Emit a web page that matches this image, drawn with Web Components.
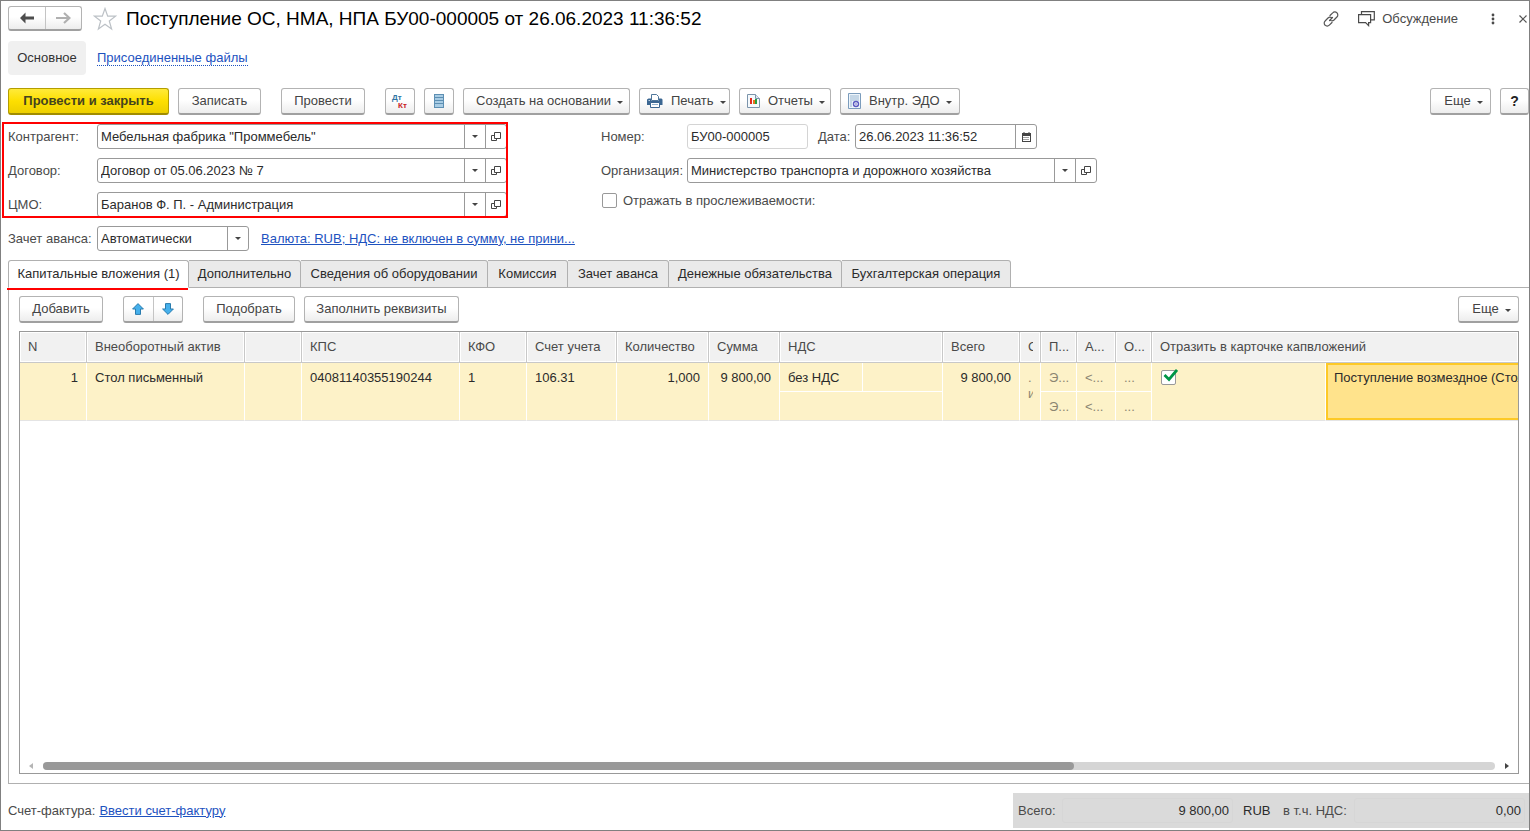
<!DOCTYPE html>
<html lang="ru">
<head>
<meta charset="utf-8">
<title>Поступление ОС, НМА, НПА</title>
<style>
  body { margin: 0; background: #fff; font: 13px/16px "Liberation Sans", Arial, sans-serif; color: #4a4a4a; }
</style>
</head>
<body>
<receipt-form></receipt-form>
<script>
const base = `
  *, *::before, *::after { box-sizing: border-box; }
  :host { box-sizing: border-box; display: block; }
  button, input, select { font: inherit; color: inherit; margin: 0; }
  button { cursor: pointer; }
  svg { display: block; flex: none; }
  a { color: #1d52bf; }
`;
const define = (name, render, after) => customElements.define(name, class extends HTMLElement {
  connectedCallback() {
    if (this.shadowRoot) return;
    this.attachShadow({ mode: 'open' }).innerHTML = render(this);
    if (after) after(this);
  }
});

const icons = {
  back: `<svg width="16" height="12" viewBox="0 0 16 12"><path d="M6.500.5L1 6l5.500 5.500V7.500H15v-3H6.500z" fill="#4d4d4d"/></svg>`,
  forward: `<svg width="16" height="12" viewBox="0 0 16 12"><path d="M9 1l5.500 5L9 11M14 6H1" fill="none" stroke="#b0b0b0" stroke-width="2.200"/></svg>`,
  star: `<svg width="24" height="24" viewBox="0 0 24 24"><path d="M12 1.500l2.700 7.600h7.800l-6.200 4.900 2.300 8-6.600-4.700L5.400 22l2.300-8-6.200-4.900h7.800z" fill="none" stroke="#bcc1c6" stroke-width="1.200"/></svg>`,
  link: `<svg width="16" height="16" viewBox="0 0 16 16" fill="none" stroke="#555" stroke-width="1.200" stroke-linecap="round"><path d="M7 4.500l2.700-2.700a2.900 2.900 0 0 1 4.200 0 2.900 2.900 0 0 1 0 4.200L11 9a2.900 2.900 0 0 1-3.400.5M9 11.500l-2.700 2.700a2.900 2.900 0 0 1-4.200 0 2.900 2.900 0 0 1 0-4.200L5 7a2.900 2.900 0 0 1 3.400-.5M6.500 9.500l3-3"/></svg>`,
  chat: `<svg width="17" height="16" viewBox="0 0 17 16" fill="none" stroke="#4a4a4a" stroke-width="1.200"><path d="M.6 3.600h12v8h-2v3l-3-3h-7z"/><path d="M3.500 3.500V.6h12.800v8.200h-3.500" /></svg>`,
  dots: `<svg width="4" height="12" viewBox="0 0 4 12" fill="#4a4a4a"><circle cx="2" cy="2" r="1.400"/><circle cx="2" cy="6" r="1.400"/><circle cx="2" cy="10" r="1.400"/></svg>`,
  close: `<svg width="8" height="8" viewBox="0 0 8 8"><path d="M.5.5l7 7m0-7l-7 7" stroke="#555" stroke-width="1.200"/></svg>`,
  dtkt: `<svg width="18" height="18" viewBox="0 0 18 18"><text x="1" y="8" font-family="Liberation Sans, sans-serif" font-weight="bold" font-size="8" fill="#2f74a3">Дт</text><text x="7" y="16" font-family="Liberation Sans, sans-serif" font-weight="bold" font-size="8" fill="#c8221c">Кт</text></svg>`,
  list: `<svg width="10" height="14" viewBox="0 0 10 14"><path d="M0 0h10v14H0z" fill="#5d8fb3"/><path d="M1 1h8v2H1zM1 4h8v2H1zM1 7h8v2H1zM1 10h8v3H1z" fill="#a8cce4"/></svg>`,
  print: `<svg width="16" height="14" viewBox="0 0 16 14"><path d="M4.500.5h5l2 2v4h-7z" fill="#fff" stroke="#50779b"/><path d="M1.500 4.500H4V7h8V4.500h2.500l1 1V11H0V5.500z" fill="#3c6792"/><path d="M3.500 8.500h9v5h-9z" fill="#fff" stroke="#3c6792"/><path d="M5 10.500h6" stroke="#8fb0cc"/><path d="M1.500 6.500h1.500" stroke="#bcd3e6"/></svg>`,
  report: `<svg width="13" height="14" viewBox="0 0 13 14"><path d="M.5.5h8l4 4v9H.5z" fill="#f5f9fc" stroke="#7b94ab"/><path d="M8.500.5v4h4" fill="#dbe6ef" stroke="#7b94ab"/><path d="M3 4h2v6H3z" fill="#e02b20"/><path d="M6 6h2v4H6z" fill="#e8731e"/><path d="M8 5h2v5H8z" fill="#26a03c"/></svg>`,
  edo: `<svg width="13" height="16" viewBox="0 0 13 16"><path d="M.5.5h12v15H.5z" fill="#eef5fb" stroke="#7b9cbc"/><path d="M2 3h9M2 5h9M2 7h9M2 9h2M2 11h2M2 13h2" stroke="#9bb8d2"/><circle cx="8" cy="11" r="2.500" fill="#fff" stroke="#5a5ac0" stroke-width="1.400"/><circle cx="8" cy="11" r=".8" fill="#5a5ac0"/></svg>`,
  caret: `<svg width="6" height="3" viewBox="0 0 6 3"><path d="M0 0h6L3 3z" fill="#444"/></svg>`,
  open: `<svg width="10" height="10" viewBox="0 0 10 10" fill="none" stroke="#444"><path d="M3.500.5h6v6h-6z"/><path d="M3 3.500H.5v5h5V7"/></svg>`,
  calendar: `<svg width="9" height="10" viewBox="0 0 9 10"><path d="M0 1h9v9H0z" fill="#444"/><path d="M2 0v2M7 0v2" stroke="#444"/><path d="M1 4h7v5H1z" fill="#fff"/><path d="M1.500 5.500h6M1.500 7.500h6" stroke="#444" stroke-dasharray="1 1"/></svg>`,
  up: `<svg width="12" height="12" viewBox="0 0 12 12"><path d="M6 .6L11.400 6H8.500v5.400h-5V6H.6z" fill="#45b0ec" stroke="#2a7cae"/></svg>`,
  down: `<svg width="12" height="12" viewBox="0 0 12 12"><path d="M6 11.400L11.400 6H8.500V.6h-5V6H.6z" fill="#45b0ec" stroke="#2a7cae"/></svg>`,
  left: `<svg width="4" height="6" viewBox="0 0 4 6"><path d="M4 0v6L0 3z" fill="#b5b5b5"/></svg>`,
  right: `<svg width="4" height="6" viewBox="0 0 4 6"><path d="M0 0v6l4-3z" fill="#444"/></svg>`,
  tick: `<svg width="16" height="14" viewBox="0 0 16 14"><path d="M2.500 6L7 10.500l8-9.500" fill="none" stroke="#009646" stroke-width="2.800"/></svg>`
};

/* Command button: icon, caption and an optional menu arrow. */
define('cmd-button', el => `
  <style>${base}
    :host { flex: none; width: var(--w, auto); }
    button { width: 100%; height: 27px; padding: 0; display: flex; align-items: center; justify-content: center; gap: 8px;
      border: 1px solid #b3b3b3; border-bottom: 2px solid #a0a0a0; border-radius: 3px;
      background: linear-gradient(#fff 45%, #ededed); color: #444; white-space: nowrap; }
    :host([icon][menu]) button { justify-content: flex-start; padding-left: 7px; }
    .caret { margin-left: -2px; margin-top: 3px; }
    :host([menu]:not([icon])) button { padding-left: 6px; }
    :host([primary]) button { background: linear-gradient(#ffea3a, #fddf00 50%, #edcf00); border-color: #b39d00 #b39d00 #a08c00; font-weight: bold; color: #44431f; }
    :host([help]) button { font-weight: bold; color: #222; font-size: 14px; }
  </style>
  <button type="button" aria-label="${el.getAttribute('label') || el.textContent}">${icons[el.getAttribute('icon')] || ''}${el.textContent ? '<span><slot></slot></span>' : ''}${el.hasAttribute('menu') ? `<span class="caret">${icons.caret}</span>` : ''}</button>`);

/* Two icon buttons joined in one frame. */
define('button-pair', el => {
  const [a, b] = el.getAttribute('icons').split(' ');
  const [la, lb] = el.getAttribute('labels').split('|');
  return `
  <style>${base}
    :host { display: flex; flex: none; width: var(--w); height: var(--h, 27px); border: 1px solid #b3b3b3; border-bottom: 2px solid #a0a0a0; border-radius: 3px; background: linear-gradient(#fff 45%, #ededed); }
    button { flex: 1; padding: 0; border: 0; background: none; display: grid; place-items: center; }
    button + button { border-left: 1px solid #c4c4c4; }
  </style>
  <button type="button" aria-label="${la}">${icons[a]}</button><button type="button" aria-label="${lb}">${icons[b]}</button>`;
});

/* Labelled text box with optional picker buttons. */
define('form-field', el => {
  const kind = el.getAttribute('buttons') || '';
  const value = (el.getAttribute('value') || '').replace(/"/g, '&quot;');
  const names = { caret: 'Выбрать', open: 'Открыть', calendar: 'Календарь' };
  return `
  <style>${base}
    :host { display: flex; align-items: center; height: 25px; min-width: 0; }
    label { flex: none; width: var(--label, 89px); white-space: nowrap; }
    .box { flex: 1; min-width: 0; height: 25px; display: flex; border: 1px solid #999; border-radius: 3px; background: #fff; color: #2b2b2b; }
    :host([readonly]) .box { border-color: #d4d4d4; }
    input, select { flex: 1; min-width: 0; width: 0; border: 0; padding: 0 3px; background: none; outline: 0; appearance: none; }
    button, .arrow { flex: none; width: 21px; padding: 0; border: 0; border-left: 1px solid #999; background: none; display: grid; place-items: center; }
    .drop { display: grid; grid-template-columns: 1fr 21px; flex: 1; }
    .drop select { grid-area: 1 / 1 / 2 / 3; width: 100%; }
    .drop .arrow { grid-area: 1 / 2; pointer-events: none; }
  </style>
  <label for="f">${el.getAttribute('label')}</label>
  <div class="box">${el.hasAttribute('select')
    ? `<div class="drop"><select id="f"><option>${value}</option></select><span class="arrow">${icons.caret}</span></div>`
    : `<input id="f" type="text" value="${value}"${el.hasAttribute('readonly') ? ' readonly' : ''}>` +
      kind.split(' ').filter(Boolean).map(k => `<button type="button" aria-label="${names[k]}">${icons[k]}</button>`).join('')}</div>`;
});

define('form-header', () => `
  <style>${base}
    :host { display: flex; align-items: center; height: 35px; padding-right: 2px; }
    h1 { margin: 0 auto 0 9px; font-size: 19px; line-height: 24px; font-weight: normal; color: #000; white-space: nowrap; }
    button { border: 0; background: none; padding: 0; display: flex; align-items: center; gap: 7px; color: #4a4a4a; }
    .star { margin-left: 11px; }
    .chat { margin: 0 33px 0 19px; }
    .close { margin-left: 24px; }
  </style>
  <button-pair style="--w:74px;--h:25px" icons="back forward" labels="Назад|Вперед"></button-pair>
  <button class="star" aria-label="В избранное">${icons.star}</button>
  <h1>Поступление ОС, НМА, НПА БУ00-000005 от 26.06.2023 11:36:52</h1>
  <button aria-label="Ссылка">${icons.link}</button>
  <button class="chat">${icons.chat}<span>Обсуждение</span></button>
  <button aria-label="Меню">${icons.dots}</button>
  <button class="close" aria-label="Закрыть">${icons.close}</button>`);

define('section-nav', () => `
  <style>${base}
    nav { display: flex; align-items: center; gap: 11px; }
    span { height: 34px; width: 78px; line-height: 34px; text-align: center; background: #f0f0f0; border-radius: 4px; color: #333; }
    a { text-decoration: none; border-bottom: 1px dotted #1d52bf; line-height: 14px; }
  </style>
  <nav><span aria-current="page">Основное</span><a href="#files">Присоединенные файлы</a></nav>`);

define('command-bar', () => `
  <style>${base}
    :host { display: flex; gap: 20px; }
    .group { display: flex; gap: 9px; }
    .end { margin-left: auto; }
  </style>
  <div class="group"><cmd-button primary style="--w:161px">Провести и закрыть</cmd-button><cmd-button style="--w:83px">Записать</cmd-button></div>
  <div class="group"><cmd-button style="--w:84px">Провести</cmd-button></div>
  <div class="group">
    <cmd-button icon="dtkt" label="Дт Кт" style="--w:30px"></cmd-button>
    <cmd-button icon="list" label="Реестр" style="--w:30px"></cmd-button>
    <cmd-button menu style="--w:167px">Создать на основании</cmd-button>
    <cmd-button icon="print" menu style="--w:91px">Печать</cmd-button>
    <cmd-button icon="report" menu style="--w:92px">Отчеты</cmd-button>
    <cmd-button icon="edo" menu style="--w:120px">Внутр. ЭДО</cmd-button>
  </div>
  <div class="group end"><cmd-button menu style="--w:61px">Еще</cmd-button><cmd-button help style="--w:29px">?</cmd-button></div>`);

define('document-fields', () => `
  <style>${base}
    :host { display: grid; grid-template-columns: minmax(0, 499px) minmax(0, 496px); column-gap: 94px; }
    .col { display: flex; flex-direction: column; gap: 9px; }
    .marked { position: relative; display: flex; flex-direction: column; gap: 9px; }
    .marked::after { content: ""; position: absolute; inset: -2px -1px -1px -6px; border: 2px solid #f00; pointer-events: none; }
    .row { display: flex; gap: 10px; align-items: center; }
    .advance-row { gap: 12px; }
    .advance { flex: none; width: 241px; }
    .number { width: 207px; }
    .date { width: 219px; --label: 37px; }
    .right { --label: 86px; }
    .check { display: flex; align-items: center; gap: 6px; height: 17px; }
    input { appearance: none; width: 15px; height: 15px; margin: 0 0 0 1px; border: 1px solid #999; border-radius: 2px; background: #fff; }
    a { white-space: nowrap; }
  </style>
  <div class="col">
    <div class="marked">
      <form-field label="Контрагент:" value='Мебельная фабрика "Проммебель"' buttons="caret open"></form-field>
      <form-field label="Договор:" value="Договор от 05.06.2023 № 7" buttons="caret open"></form-field>
      <form-field label="ЦМО:" value="Баранов Ф. П. - Администрация" buttons="caret open"></form-field>
    </div>
    <div class="row advance-row">
      <form-field class="advance" label="Зачет аванса:" value="Автоматически" select></form-field>
      <a href="#currency">Валюта: RUB; НДС: не включен в сумму, не прини...</a>
    </div>
  </div>
  <div class="col right">
    <div class="row">
      <form-field class="number" label="Номер:" value="БУ00-000005" readonly></form-field>
      <form-field class="date" label="Дата:" value="26.06.2023 11:36:52" buttons="calendar"></form-field>
    </div>
    <form-field label="Организация:" value="Министерство транспорта и дорожного хозяйства" buttons="caret open"></form-field>
    <div class="check"><input id="trace" type="checkbox"><label for="trace">Отражать в прослеживаемости:</label></div>
  </div>`);

define('tab-strip', () => `
  <style>${base}
    :host { display: flex; position: relative; z-index: 1; }
    button { position: relative; width: var(--w); height: 28px; padding: 0; border: 1px solid #b0b0b0; border-left-width: 0; background: #eaeaea; color: #2b2b2b; white-space: nowrap; border-radius: 0 3px 0 0; }
    button[aria-selected=true] { background: #fff; border-left-width: 1px; border-bottom-color: #fff; border-radius: 3px 3px 0 0; }
    button[aria-selected=true]::after { content: ""; position: absolute; left: -2px; right: 0; bottom: -3px; height: 2px; background: #f00; }
  </style>
  ${[['Капитальные вложения (1)', 181], ['Дополнительно', 112], ['Сведения об оборудовании', 187], ['Комиссия', 80], ['Зачет аванса', 101], ['Денежные обязательства', 173], ['Бухгалтерская операция', 169]]
    .map(([t, w], i) => `<button role="tab" aria-selected="${!i}" style="--w:${w}px">${t}</button>`).join('')}`,
  el => el.setAttribute('role', 'tablist'));

define('assets-table', () => `
  <style>${base}
    :host { flex: 1; display: flex; flex-direction: column; border: 1px solid #999; overflow: hidden; min-height: 0; }
    .view { flex: 1; overflow: hidden; }
    table { width: 100%; table-layout: fixed; border-collapse: separate; border-spacing: 0; }
    th { height: 31px; padding: 0 7px 0 8px; text-align: left; font-weight: normal; color: #4a4a4a; background: #f1f1f1; border-right: 1px solid #c8c8c8; border-bottom: 1px solid #c8c8c8; box-shadow: inset 0 0 0 1px #fff; white-space: nowrap; overflow: hidden; }
    td { height: 29px; padding: 7px 8px 0 8px; vertical-align: top; color: #2b2b2b; background: #fdf2c8; border-right: 1px solid #fff; border-bottom: 1px solid #fff; white-space: nowrap; overflow: hidden; }
    td[rowspan], tr:last-child td { border-bottom-color: #e4e4e4; }
    th:last-child, .active { border-right: 0; }
    .num { text-align: right; }
    .faint { color: #8c8672; padding-right: 0; }
    .narrow { padding-right: 5px; }
    .wrap { white-space: normal; line-height: 16px; }
    td.active { padding-right: 0; background: #ffe38c; box-shadow: inset 2px 2px #fdc926, inset 0 -2px #fdc926; }
    .cut { display: block; width: 5px; overflow: hidden; }
    .tick { position: relative; width: 15px; height: 15px; margin-left: 1px; }
    .tick input { appearance: none; display: block; width: 15px; height: 15px; border: 1px solid #999; border-radius: 2px; background: #fff; }
    .tick svg { position: absolute; left: 1px; top: -1px; pointer-events: none; }
    .bar { display: flex; align-items: center; gap: 10px; padding: 0 9px; height: 15px; }
    .track { flex: 1; height: 8px; border-radius: 4px; background: #d5d5d5; }
    .thumb { width: 71%; height: 8px; border-radius: 4px; background: #999; }
  </style>
  <div class="view"><table>
    <colgroup>${[67, 158, 57, 158, 67, 90, 92, 71, 83, 80, 77, 21, 36, 39, 36, 174].map(w => `<col style="width:${w}px">`).join('')}<col></colgroup>
    <thead><tr><th>N</th><th>Внеоборотный актив</th><th></th><th>КПС</th><th>КФО</th><th>Счет учета</th><th>Количество</th><th>Сумма</th><th colspan="2">НДС</th><th>Всего</th><th><span class="cut">С</span></th><th class="narrow">П...</th><th>А...</th><th>О...</th><th colspan="2">Отразить в карточке капвложений</th></tr></thead>
    <tbody>
      <tr><td rowspan="2" class="num">1</td><td rowspan="2">Стол письменный</td><td rowspan="2"></td><td rowspan="2">04081140355190244</td><td rowspan="2">1</td><td rowspan="2">106.31</td><td rowspan="2" class="num">1,000</td><td rowspan="2" class="num">9 800,00</td><td>без НДС</td><td></td><td rowspan="2" class="num">9 800,00</td><td rowspan="2" class="faint wrap"><span class="cut">. и</span></td><td class="faint">Э...</td><td class="faint">&lt;...</td><td class="faint">...</td><td rowspan="2"><div class="tick"><input type="checkbox" checked aria-label="Отразить в карточке капвложений">${icons.tick}</div></td><td rowspan="2" class="active">Поступление возмездное (Стол</td></tr>
      <tr><td colspan="2"></td><td class="faint">Э...</td><td class="faint">&lt;...</td><td class="faint">...</td></tr>
    </tbody>
  </table></div>
  <div class="bar">${icons.left}<div class="track"><div class="thumb"></div></div>${icons.right}</div>`);

define('tab-panel', () => `
  <style>${base}
    :host { flex: 1; display: flex; flex-direction: column; gap: 8px; margin-top: -1px; padding: 8px 10px 9px; border: 1px solid #b0b0b0; border-right: 0; }
    .bar { display: flex; gap: 20px; }
    .group { display: flex; gap: 9px; }
    .end { margin-left: auto; }
  </style>
  <div class="bar">
    <cmd-button style="--w:84px">Добавить</cmd-button>
    <button-pair style="--w:60px" icons="up down" labels="Переместить вверх|Переместить вниз"></button-pair>
    <div class="group"><cmd-button style="--w:92px">Подобрать</cmd-button><cmd-button style="--w:155px">Заполнить реквизиты</cmd-button></div>
    <cmd-button class="end" menu style="--w:61px">Еще</cmd-button>
  </div>
  <assets-table></assets-table>`);

define('form-footer', () => `
  <style>${base}
    :host { display: flex; align-items: center; gap: 4px; height: 35px; }
    .totals { margin-left: auto; height: 35px; display: flex; align-items: center; padding: 0 4px 0 5px; background: #dadada; }
    input { width: 171px; height: 25px; padding: 0 3px; border: 1px solid #d6d6d6; border-radius: 3px; background: none; text-align: right; color: #2b2b2b; }
    .totals label { width: 44px; white-space: nowrap; }
    .cur { width: 50px; padding-left: 10px; color: #2b2b2b; }
    .totals .vat { width: 71px; }
  </style>
  <span>Счет-фактура:</span><a href="#invoice">Ввести счет-фактуру</a>
  <div class="totals"><label for="sum">Всего:</label><input id="sum" readonly value="9 800,00"><span class="cur">RUB</span><label class="vat" for="vat">в т.ч. НДС:</label><input id="vat" readonly value="0,00"></div>`);

define('receipt-form', () => `
  <style>${base}
    :host { display: flex; flex-direction: column; min-height: 100vh; padding: 0 0 2px 7px; border: 1px solid #808080; overflow: hidden; }
    section-nav { margin-top: 5px; }
    command-bar { margin-top: 13px; }
    document-fields, tab-strip, form-footer { margin-top: 9px; }
  </style>
  <form-header></form-header>
  <section-nav></section-nav>
  <command-bar></command-bar>
  <document-fields></document-fields>
  <tab-strip></tab-strip>
  <tab-panel></tab-panel>
  <form-footer></form-footer>`);
</script>
</body>
</html>
